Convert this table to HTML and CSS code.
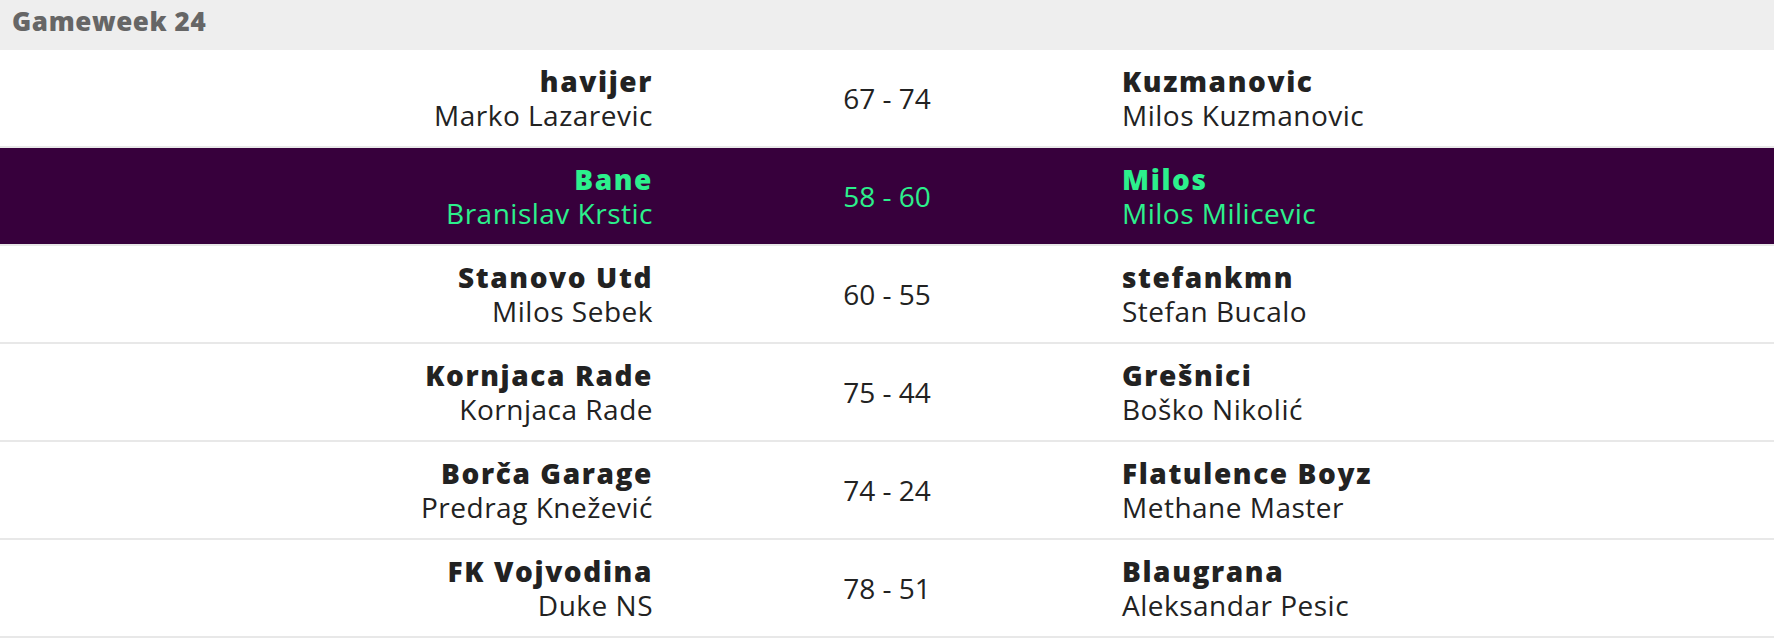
FILE: index.html
```html
<!DOCTYPE html>
<html lang="sr">
<head>
<meta charset="utf-8">
<title>Gameweek 24</title>
<link rel="stylesheet" href="styles.css">
</head>
<body>
<section class="fixtures">
  <h2 class="gw-title">Gameweek 24</h2>
  <ul class="matches">
    <li class="match">
      <div class="side home"><div class="team">havijer</div><div class="player">Marko Lazarevic</div></div>
      <div class="score">67 - 74</div>
      <div class="side away"><div class="team">Kuzmanovic</div><div class="player">Milos Kuzmanovic</div></div>
    </li>
    <li class="match mine">
      <div class="side home"><div class="team">Bane</div><div class="player">Branislav Krstic</div></div>
      <div class="score">58 - 60</div>
      <div class="side away"><div class="team">Milos</div><div class="player">Milos Milicevic</div></div>
    </li>
    <li class="match">
      <div class="side home"><div class="team">Stanovo Utd</div><div class="player">Milos Sebek</div></div>
      <div class="score">60 - 55</div>
      <div class="side away"><div class="team">stefankmn</div><div class="player">Stefan Bucalo</div></div>
    </li>
    <li class="match">
      <div class="side home"><div class="team">Kornjaca Rade</div><div class="player">Kornjaca Rade</div></div>
      <div class="score">75 - 44</div>
      <div class="side away"><div class="team">Grešnici</div><div class="player">Boško Nikolić</div></div>
    </li>
    <li class="match">
      <div class="side home"><div class="team">Borča Garage</div><div class="player">Predrag Knežević</div></div>
      <div class="score">74 - 24</div>
      <div class="side away"><div class="team">Flatulence Boyz</div><div class="player">Methane Master</div></div>
    </li>
    <li class="match">
      <div class="side home"><div class="team">FK Vojvodina</div><div class="player">Duke NS</div></div>
      <div class="score">78 - 51</div>
      <div class="side away"><div class="team">Blaugrana</div><div class="player">Aleksandar Pesic</div></div>
    </li>
  </ul>
</section>
</body>
</html>
```
FILE: styles.css
```css
html, body {
  margin: 0;
  padding: 0;
  background: #fff;
}
body {
  font-family: "Open Sans", "Liberation Sans", sans-serif;
  color: #222;
}
.fixtures {
  width: 100%;
}
.gw-title {
  margin: 0;
  height: 50px;
  box-sizing: border-box;
  padding: 0 0 0 12px;
  background: #eeeeee;
  color: #666;
  font-size: 26px;
  font-weight: 800;
  letter-spacing: 0.6px;
  line-height: 42px;
}
.matches {
  list-style: none;
  margin: 0;
  padding: 0;
}
.match {
  display: grid;
  grid-template-columns: 1fr 470px 1fr;
  align-items: center;
  height: 96px;
  border-bottom: 2px solid #e8e8e8;
}
.side {
  line-height: 34px;
  font-size: 28px;
}
.home {
  text-align: right;
}
.away {
  text-align: left;
}
.team {
  font-weight: 800;
  letter-spacing: 1.6px;
}
.home .team,
.home .player {
  margin-right: -1px;
}
.player {
  font-weight: 400;
  letter-spacing: 0.5px;
}
.score {
  text-align: center;
  font-size: 28px;
}
.mine {
  background: #37003c;
  color: #2cf08c;
}
```
